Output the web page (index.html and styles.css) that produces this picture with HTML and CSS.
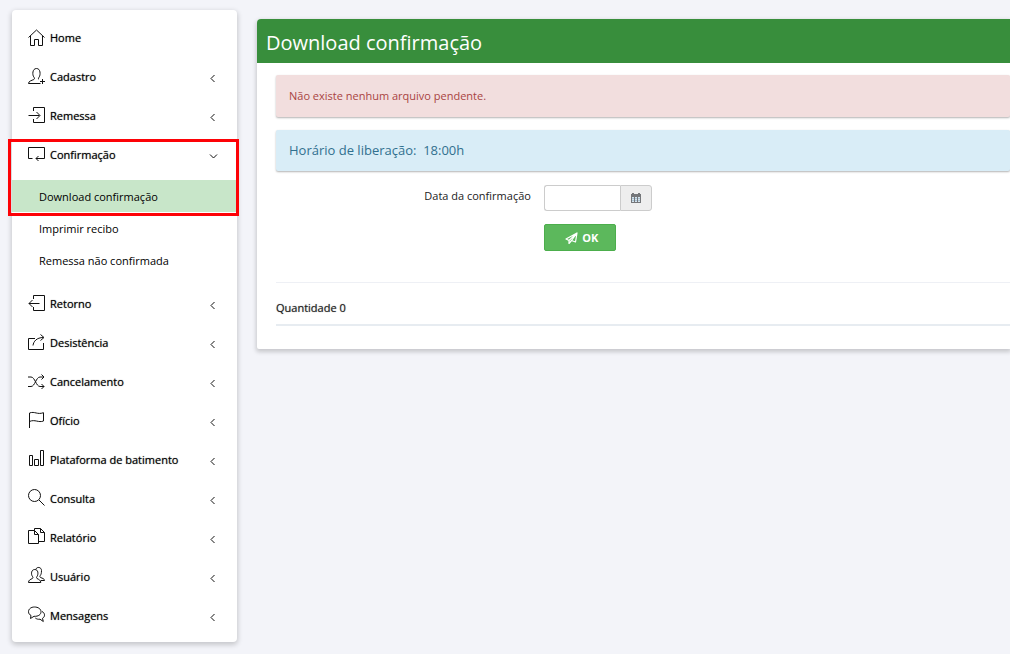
FILE: index.html
```html
<!DOCTYPE html>
<html lang="pt-BR">
<head>
<meta charset="utf-8">
<meta name="viewport" content="width=device-width, initial-scale=1">
<title>Download confirmação</title>
<link rel="stylesheet" href="styles.css">
</head>
<body>
<svg class="sprite" aria-hidden="true">
  <symbol id="left" viewBox="0 0 9 9"><path d="M5.500 1 2 4.500 5.500 8"/></symbol>
  <symbol id="down" viewBox="0 0 9 9"><path d="M1 2.500 4.500 6 8 2.500"/></symbol>
</svg>
<div class="layout">
  <nav class="sidebar" aria-label="Menu principal">
    <ul class="menu">
      <li><a class="item" href="#"><svg class="icon" viewBox="0 0 17 17"><path d="M.5 8.500 8.500 1l8 7.500M2.500 7v9.500h4v-6h4v6h4V7"/></svg><span>Home</span></a></li>
      <li><a class="item" href="#"><svg class="icon" viewBox="0 0 17 17"><path d="M11 11.500c-1-.5-.5-1.500.3-2.700C12.500 7 12.800.5 8.500.5S4.300 7 5.700 8.800c.9 1.200 1.100 2.200.1 2.700-2 1-5.300 1.500-5.300 4h12M14.500 11v5m-2.500-2.500h5"/></svg><span>Cadastro</span><svg class="arrow"><use href="#left"/></svg></a></li>
      <li><a class="item" href="#"><svg class="icon" viewBox="0 0 17 17"><path d="M5.500 4V.5h11v15h-11V12M.5 8.500h11M8.500 5l3.500 3.500L8.500 12"/></svg><span>Remessa</span><svg class="arrow"><use href="#left"/></svg></a></li>
      <li class="open"><a class="item" href="#" aria-expanded="true"><svg class="icon" viewBox="0 0 17 17"><path d="M4.500 12.500h-4v-11h16v11H8m2.500-2.500L8 12.500l2.500 2.500"/></svg><span>Confirmação</span><svg class="arrow"><use href="#down"/></svg></a>
        <ul class="submenu">
          <li><a class="subitem active" href="#" aria-current="page">Download confirmação</a></li>
          <li><a class="subitem" href="#">Imprimir recibo</a></li>
          <li><a class="subitem" href="#">Remessa não confirmada</a></li>
        </ul>
        <div class="highlight"></div>
      </li>
      <li><a class="item" href="#"><svg class="icon" viewBox="0 0 17 17"><path d="M5.500 4V.5h11v15h-11V12M11.500 8.500H1M4.500 5 1 8.500 4.500 12"/></svg><span>Retorno</span><svg class="arrow"><use href="#left"/></svg></a></li>
      <li><a class="item" href="#"><svg class="icon" viewBox="0 0 17 17"><path d="M7 4.500H.5v11h15V9M5 11.500c.5-4 3.500-8 10.500-8M12.500.5l3.500 3-3.500 3"/></svg><span>Desistência</span><svg class="arrow"><use href="#left"/></svg></a></li>
      <li><a class="item" href="#"><svg class="icon" viewBox="0 0 17 17"><path d="M0 4h3c4 0 5 9.500 9 9.500h4M0 13.500h3c4 0 5-9.500 9-9.500h4M13.500 1.500 16 4l-2.500 2.500M13.500 11l2.500 2.500-2.500 2.500"/></svg><span>Cancelamento</span><svg class="arrow"><use href="#left"/></svg></a></li>
      <li><a class="item" href="#"><svg class="icon" viewBox="0 0 17 17"><path d="M1.500 16V1C7-1 9 3 15.500.7V9c-5 2-8.500-2-14 .5"/></svg><span>Ofício</span><svg class="arrow"><use href="#left"/></svg></a></li>
      <li><a class="item" href="#"><svg class="icon" viewBox="0 0 17 17"><path d="M1.500 4.500h3v10h-3zM6.500 8.500h4v6h-4zM12.500-.5h3v15h-3z"/></svg><span>Plataforma de batimento</span><svg class="arrow"><use href="#left"/></svg></a></li>
      <li><a class="item" href="#"><svg class="icon" viewBox="0 0 17 17"><circle cx="6.500" cy="5.500" r="6"/><path d="m11 10 5.500 5.500"/></svg><span>Consulta</span><svg class="arrow"><use href="#left"/></svg></a></li>
      <li><a class="item" href="#"><svg class="icon" viewBox="0 0 17 17"><path d="M6.500 1.500h-6v13h10v-9zM6.500 1.500v4h4M6.500 1.500v-2h6l4 4v9h-6M12.500-.5v4h4"/></svg><span>Relatório</span><svg class="arrow"><use href="#left"/></svg></a></li>
      <li><a class="item" href="#"><svg class="icon" viewBox="0 1 17 17"><path d="M9 11.500c-1-.5-.3-1.500.3-2.500 1-1.700 1.200-6.500-2.500-6.500S3 7.300 4.200 9c.7 1 1.200 2 .2 2.500-2 1-3.900 1.500-3.900 4h12.300c0-2.500-2-3-3.800-4zM8 2C9-.5 13.500 0 13.500 3.500c0 3-.5 4-1.200 5-.6 1-.6 1.500.2 2 2 .8 4 1.200 4 3H13"/></svg><span>Usuário</span><svg class="arrow"><use href="#left"/></svg></a></li>
      <li><a class="item" href="#"><svg class="icon" viewBox="0 1 17 17"><path d="M6.500 1C3 1 .5 3 .5 5.700c0 1.700 1 3 2.500 3.800L2.500 12.500 6 10.300c4.500.3 7-1.800 7-4.600S10 1 6.500 1zM14 5.500c3 1.300 3.500 5.200.5 6.800l.8 3.200-3.300-2.300c-2 .3-3.500-.2-4.700-1.200"/></svg><span>Mensagens</span><svg class="arrow"><use href="#left"/></svg></a></li>
    </ul>
  </nav>
  <main class="panel">
    <h1 class="title">Download confirmação</h1>
    <div class="content">
      <div class="alert danger" role="alert">Não existe nenhum arquivo pendente.</div>
      <div class="alert info">Horário de liberação:&nbsp; 18:00h</div>
      <form class="form">
        <label class="label" for="data">Data da confirmação</label>
        <div class="date">
          <input class="date-input" id="data" type="text">
          <button class="date-button" type="button" aria-label="Abrir calendário"><svg width="10" height="10" viewBox="0 0 10 10"><path fill="#75777a" d="M0 1h1V0h2v1h4V0h2v1h1v9H0z"/><path fill="#d5e4ee" d="M1 4h2v1H1zM4 4h2v1H4zM7 4h2v1H7zM1 6h2v1H1zM4 6h2v1H4zM7 6h2v1H7zM1 8h2v1H1zM4 8h2v1H4zM7 8h2v1H7z"/><path fill="#a9c0d0" d="M1 5h2v1H1zM4 5h2v1H4zM7 5h2v1H7zM1 7h2v1H1zM4 7h2v1H4zM7 7h2v1H7z"/></svg></button>
        </div>
        <button class="submit" type="button"><svg width="13" height="12" viewBox="0 0 13 12"><path fill="none" stroke="#fff" stroke-width="1.200" stroke-linejoin="round" d="M12 1 1 7l3 1.500L12 1l-1.500 9L6.500 8.500 12 1M4 8.500v3l2.500-3"/></svg>OK</button>
      </form>
      <div class="total">Quantidade 0</div>
    </div>
  </main>
</div>
</body>
</html>
```
FILE: styles.css
```css
* { box-sizing: border-box; }
body {
  margin: 0;
  background: #f3f4f9;
  color: #222;
  font-family: "Open Sans", sans-serif;
  font-size: 11px;
  line-height: 16px;
}
button, input { font: inherit; }
ul { list-style: none; margin: 0; padding: 0; }
.sprite { position: absolute; width: 0; height: 0; }
.layout {
  display: flex;
  align-items: flex-start;
  gap: 20px;
  padding: 10px 0 12px 12px;
}
.sidebar {
  flex: none;
  width: 225px;
  padding: 9px 0 6px;
  background: #fff;
  border-radius: 4px;
  box-shadow: 0 2px 5px 1px rgba(0, 0, 0, .18);
}
.item {
  display: flex;
  align-items: center;
  height: 39px;
  padding: 0 19px 2px 16px;
  gap: 5px;
  color: #000;
  text-decoration: none;
  text-shadow: 0 0 1px rgba(0, 0, 0, .6);
}
.icon {
  width: 17px;
  height: 17px;
  overflow: visible;
  fill: none;
  stroke: #111;
}
.arrow {
  width: 9px;
  height: 9px;
  margin: 3px 0 0 auto;
  fill: none;
  stroke: #111;
}
.open { position: relative; }
.submenu { padding: 5px 0 9px; }
.subitem {
  display: block;
  padding: 9px 27px 7px;
  color: #000;
  text-decoration: none;
}
.active { background: #c8e6c9; }
.highlight {
  position: absolute;
  top: 3px;
  left: -4px;
  right: -2px;
  height: 77px;
  border: 3px solid #fd0207;
  pointer-events: none;
}
.panel {
  flex: 1;
  min-width: 0;
  margin-top: 9px;
  background: #fff;
  border-radius: 4px 0 0 2px;
  box-shadow: 0 2px 4px 1px rgba(0, 0, 0, .18);
}
.title {
  margin: 0;
  padding: 12px 9px 8px;
  background: #388e3c;
  border-radius: 4px 0 0;
  color: #fff;
  font-size: 20px;
  font-weight: 400;
  line-height: 24px;
}
.content { padding: 12px 0 23px 19px; }
.alert {
  margin-bottom: 13px;
  padding: 13px;
  border-radius: 2px;
  box-shadow: 0 1px 2px rgba(0, 0, 0, .3);
}
.danger { background: #f2dede; color: #a94442; }
.info {
  padding-top: 12px;
  margin-bottom: 14px;
  background: #d9edf7;
  color: #31708f;
  font-size: 13px;
}
.form {
  display: grid;
  grid-template-columns: 35% 1fr;
  gap: 13px 11px;
  padding-bottom: 31px;
  border-bottom: 1px solid #eef0f5;
}
.label { padding: 3px 2px 0 0; text-align: right; }
.date { display: flex; width: 108px; height: 26px; }
.date-input {
  flex: 1;
  min-width: 0;
  border: 1px solid #ccc;
  border-right: 0;
  border-radius: 3px 0 0 3px;
  background: #fff;
}
.date-button {
  display: grid;
  place-items: center;
  width: 32px;
  padding: 0;
  border: 1px solid #ccc;
  border-radius: 0 3px 3px 0;
  background: #eee;
}
.submit {
  display: flex;
  grid-column: 2;
  align-items: center;
  justify-content: center;
  gap: 4px;
  width: 72px;
  height: 27px;
  padding: 0 0 0 4px;
  border: 1px solid #4cae4c;
  border-radius: 2px;
  background: #5cb85c;
  color: #fff;
  font-weight: 700;
}
.total {
  padding: 17px 0 8px;
  border-bottom: 2px solid #e7ecf1;
  text-shadow: 0 0 1px rgba(0, 0, 0, .5);
}
```
